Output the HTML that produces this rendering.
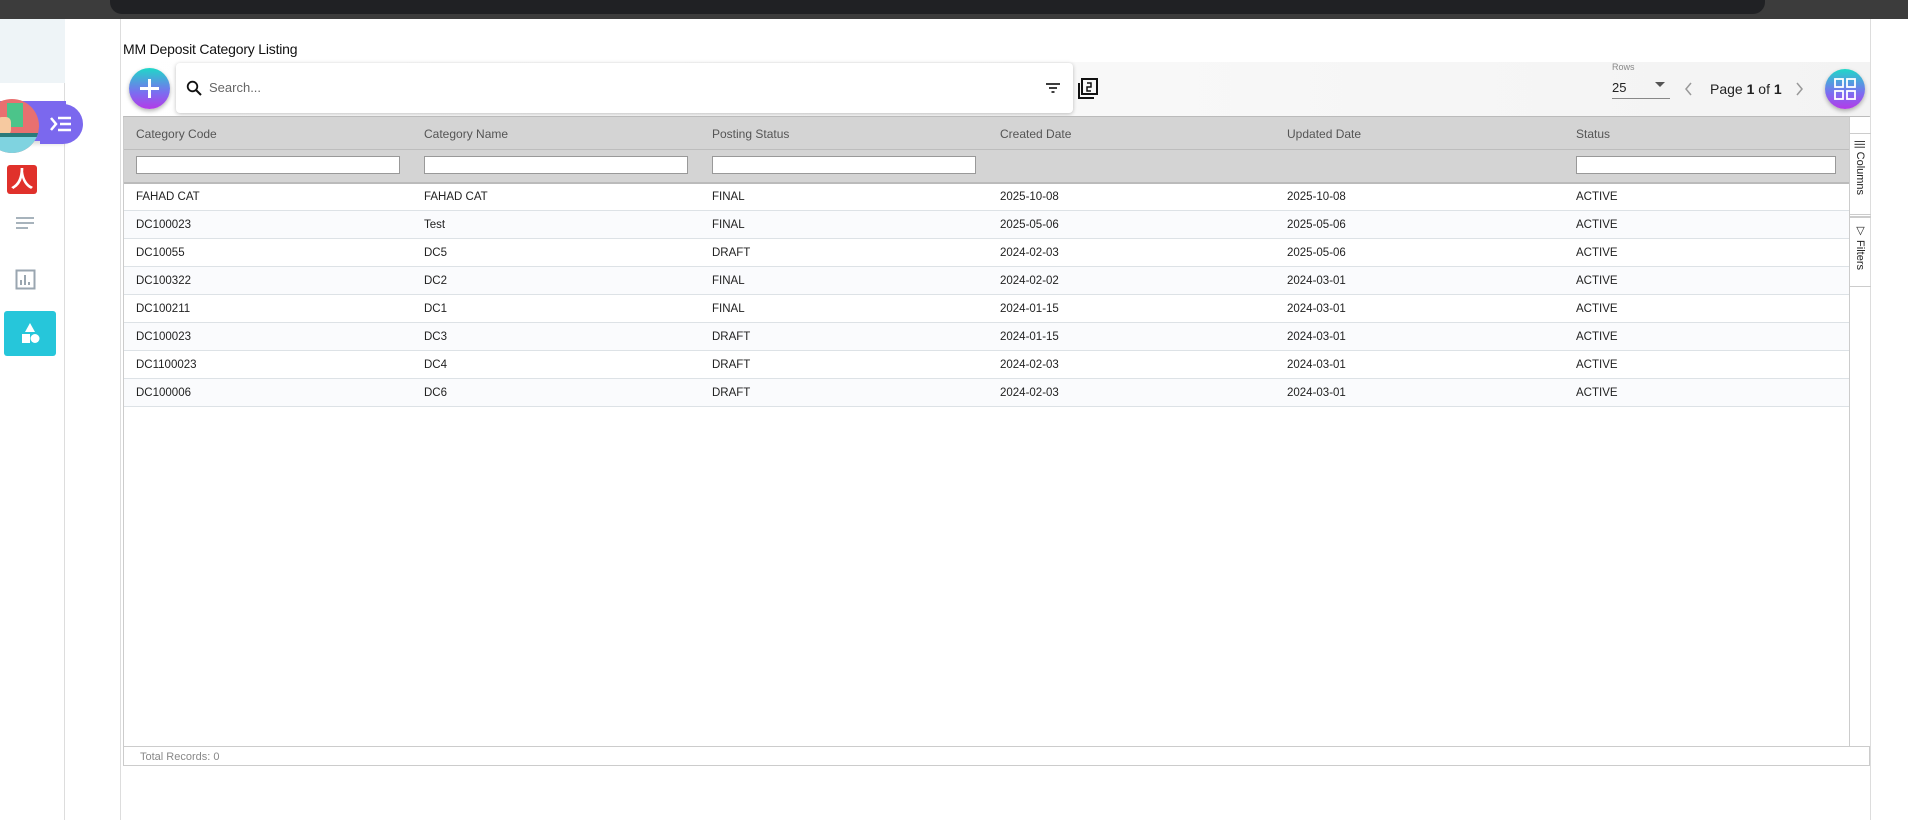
<!DOCTYPE html>
<html><head><meta charset="utf-8"><style>
*{box-sizing:border-box;margin:0;padding:0}
body{width:1908px;height:820px;overflow:hidden;background:#fff;font-family:"Liberation Sans",sans-serif;position:relative}
.abs{position:absolute}
.topbar{left:0;top:0;width:1908px;height:19px;background:#3c3c3c}
.addr{left:110px;top:0;width:1655px;height:14px;background:#202124;border-radius:0 0 12px 12px}
.side{left:0;top:19px;width:65px;height:801px;border-right:1px solid #ddd;background:#fff}
.vline{left:120px;top:19px;width:1px;height:801px;background:#ddd}
.rline{left:1870px;top:19px;width:1px;height:801px;background:#ddd}
.title{left:123px;top:41px;font-size:14px;color:#111;letter-spacing:-0.2px}
.toolbar{left:121px;top:62px;width:1749px;height:54px;background:linear-gradient(90deg,#fff 0%,#fafafa 40%,#f3f3f3 100%)}
.add{left:129px;top:68px;width:41px;height:41px;border-radius:50%;background:linear-gradient(180deg,#1fd8c8,#7b6ef0 60%,#b43ae8);box-shadow:0 2px 4px rgba(0,0,0,.3)}
.search{left:176px;top:63px;width:897px;height:50px;background:#fff;border-radius:4px;box-shadow:0 1px 4px rgba(0,0,0,.25)}
.table{left:123px;top:116px;width:1747px;height:650px;border:1px solid #ccc;border-top:2px solid #bbb}
.hdr{left:124px;top:117px;width:1725px;height:66px;background:#d4d4d4}
.hdr .t{position:absolute;top:10px;font-size:12px;color:#555}
.hdr input{position:absolute;top:39px;height:18px;border:1px solid #999;background:#fff}
.row{position:absolute;left:124px;width:1725px;height:28px;border-bottom:1px solid #dde2e6;font-size:11.5px;color:#222}
.row span{position:absolute;top:8px}
.alt{background:#fafbfd}
.sp{left:1849px;top:117px;width:21px;height:629px;border-left:1px solid #ccc;background:#fff}
.tab{position:absolute;left:0;width:21px;border-top:1px solid #ccc;border-bottom:1px solid #ccc;font-size:11px;color:#222}
.tab div{position:absolute;left:4px;writing-mode:vertical-rl}
.foot{left:124px;top:746px;width:1745px;height:19px;border-top:1px solid #ccc;font-size:11px;color:#888;padding:4px 0 0 16px}
</style></head><body>
<div class="abs topbar"></div><div class="abs addr"></div>
<div class="abs side">
 <div class="abs" style="left:0;top:0;width:65px;height:64px;background:#eef4f7"></div>
 <div class="abs" style="left:0;top:82px;width:66px;height:40px;background:#7b68ee;box-shadow:0 3px 4px rgba(0,0,0,.15)"></div>
 <div class="abs" style="left:40px;top:85px;width:43px;height:40px;background:#7b68ee;border-radius:0 20px 20px 0"></div>
 <div class="abs" style="left:-15px;top:80px;width:54px;height:54px;border-radius:50%;background:#e87070;overflow:hidden">
  <div class="abs" style="left:0;top:36px;width:54px;height:18px;background:#7fd3e0"></div>
  <div class="abs" style="left:22px;top:4px;width:16px;height:24px;background:#4cc48a"></div>
  <div class="abs" style="left:12px;top:18px;width:14px;height:18px;background:#f6c9a0;border-radius:5px"></div>
  <div class="abs" style="left:0;top:34px;width:54px;height:4px;background:#2a7a7a"></div>
 </div>
 <svg class="abs" style="left:49px;top:96px" width="24" height="18" viewBox="0 0 24 18"><path d="M2 3l5 6-5 6" stroke="#fff" stroke-width="2.5" fill="none"/><path d="M9 3h13M11 9h11M9 15h13" stroke="#fff" stroke-width="2.5"/></svg>
 <div class="abs" style="left:7px;top:146px;width:30px;height:29px;background:#e0312b;border-radius:3px;color:#fff;font-size:22px;line-height:29px;text-align:center;font-weight:bold">人</div>
 <svg class="abs" style="left:16px;top:197px" width="20" height="14"><path d="M0 2h18M0 7h18M0 12h12" stroke="#8a9aa6" stroke-width="1.5"/></svg>
 <svg class="abs" style="left:15px;top:250px" width="22" height="22"><rect x="1.5" y="1.5" width="18" height="18" fill="none" stroke="#9aa6b0" stroke-width="2"/><path d="M6 16v-5M10 16V6M14 16v-3" stroke="#9aa6b0" stroke-width="2"/></svg>
 <div class="abs" style="left:4px;top:292px;width:52px;height:45px;background:#26c6da;border-radius:3px">
  <svg class="abs" style="left:15px;top:11px" width="22" height="24"><path d="M11 1l5 9H6z" fill="#fff"/><rect x="3" y="12" width="8" height="9" fill="#fff"/><circle cx="16" cy="16.5" r="4.5" fill="#fff"/></svg>
 </div>
</div>
<div class="abs vline"></div><div class="abs rline"></div>
<div class="abs title">MM Deposit Category Listing</div>
<div class="abs toolbar"></div>
<div class="abs add"><svg class="abs" style="left:9px;top:9px" width="23" height="23"><path d="M11.5 2v19M2 11.5h19" stroke="#fff" stroke-width="3"/></svg></div>
<div class="abs search">
 <svg class="abs" style="left:10px;top:17px" width="16" height="16"><circle cx="6.5" cy="6.5" r="4.8" stroke="#111" stroke-width="1.8" fill="none"/><path d="M10 10l5 5" stroke="#111" stroke-width="2"/></svg>
 <div class="abs" style="left:33px;top:17px;font-size:13px;color:#666">Search...</div>
 <svg class="abs" style="left:869px;top:18px" width="16" height="14"><path d="M1 3h14M4 7h8M6.5 11h3" stroke="#222" stroke-width="1.8"/></svg>
</div>
<svg class="abs" style="left:1077px;top:78px" width="22" height="22"><rect x="5" y="1" width="15" height="15" fill="none" stroke="#111" stroke-width="2"/><path d="M2 5v15h15" fill="none" stroke="#111" stroke-width="2"/><path d="M10 5h4v4h-4v4h4" fill="none" stroke="#111" stroke-width="1.5"/></svg>
<div class="abs" style="left:1612px;top:62px;font-size:9px;color:#888">Rows</div>
<div class="abs" style="left:1612px;top:80px;font-size:13px;color:#222">25</div>
<div class="abs" style="left:1655px;top:82px;width:0;height:0;border-left:5px solid transparent;border-right:5px solid transparent;border-top:5px solid #555"></div>
<div class="abs" style="left:1612px;top:98px;width:58px;height:1px;background:#888"></div>
<svg class="abs" style="left:1684px;top:82px" width="10" height="14"><path d="M7 1L2 7l5 6" stroke="#999" stroke-width="1.5" fill="none"/></svg>
<div class="abs" style="left:1710px;top:81px;font-size:14px;color:#222">Page <b>1</b> of <b>1</b></div>
<svg class="abs" style="left:1794px;top:82px" width="10" height="14"><path d="M3 1l5 6-5 6" stroke="#999" stroke-width="1.5" fill="none"/></svg>
<div class="abs" style="left:1825px;top:69px;width:40px;height:40px;border-radius:50%;background:linear-gradient(180deg,#1fd8c8,#7b6ef0 60%,#b43ae8);box-shadow:0 2px 4px rgba(0,0,0,.3)">
 <svg class="abs" style="left:9px;top:9px" width="22" height="22"><g fill="none" stroke="#fff" stroke-width="1.8"><rect x="1" y="1" width="8" height="8"/><rect x="13" y="1" width="8" height="8"/><rect x="1" y="13" width="8" height="8"/><rect x="13" y="13" width="8" height="8"/></g></svg>
</div>
<div class="abs table"></div>
<div class="abs hdr">
 <div class="t" style="left:12px">Category Code</div><div class="t" style="left:300px">Category Name</div><div class="t" style="left:588px">Posting Status</div><div class="t" style="left:876px">Created Date</div><div class="t" style="left:1163px">Updated Date</div><div class="t" style="left:1452px">Status</div>
 <div style="position:absolute;left:0;top:32px;width:1725px;height:1px;background:#bdbdbd"></div>
 <input style="left:12px;width:264px"><input style="left:300px;width:264px"><input style="left:588px;width:264px"><input style="left:1452px;width:260px">
</div>
<div class="abs" style="left:124px;top:182px;width:1725px;height:2px;background:#bbb"></div>
<div class="row" style="top:183px"><span style="left:12px">FAHAD CAT</span><span style="left:300px">FAHAD CAT</span><span style="left:588px">FINAL</span><span style="left:876px">2025-10-08</span><span style="left:1163px">2025-10-08</span><span style="left:1452px">ACTIVE</span></div>
<div class="row alt" style="top:211px"><span style="left:12px">DC100023</span><span style="left:300px">Test</span><span style="left:588px">FINAL</span><span style="left:876px">2025-05-06</span><span style="left:1163px">2025-05-06</span><span style="left:1452px">ACTIVE</span></div>
<div class="row" style="top:239px"><span style="left:12px">DC10055</span><span style="left:300px">DC5</span><span style="left:588px">DRAFT</span><span style="left:876px">2024-02-03</span><span style="left:1163px">2025-05-06</span><span style="left:1452px">ACTIVE</span></div>
<div class="row alt" style="top:267px"><span style="left:12px">DC100322</span><span style="left:300px">DC2</span><span style="left:588px">FINAL</span><span style="left:876px">2024-02-02</span><span style="left:1163px">2024-03-01</span><span style="left:1452px">ACTIVE</span></div>
<div class="row" style="top:295px"><span style="left:12px">DC100211</span><span style="left:300px">DC1</span><span style="left:588px">FINAL</span><span style="left:876px">2024-01-15</span><span style="left:1163px">2024-03-01</span><span style="left:1452px">ACTIVE</span></div>
<div class="row alt" style="top:323px"><span style="left:12px">DC100023</span><span style="left:300px">DC3</span><span style="left:588px">DRAFT</span><span style="left:876px">2024-01-15</span><span style="left:1163px">2024-03-01</span><span style="left:1452px">ACTIVE</span></div>
<div class="row" style="top:351px"><span style="left:12px">DC1100023</span><span style="left:300px">DC4</span><span style="left:588px">DRAFT</span><span style="left:876px">2024-02-03</span><span style="left:1163px">2024-03-01</span><span style="left:1452px">ACTIVE</span></div>
<div class="row alt" style="top:379px"><span style="left:12px">DC100006</span><span style="left:300px">DC6</span><span style="left:588px">DRAFT</span><span style="left:876px">2024-02-03</span><span style="left:1163px">2024-03-01</span><span style="left:1452px">ACTIVE</span></div>
<div class="abs sp">
 <div class="tab" style="top:16px;height:82px"><div style="top:6px">||| Columns</div></div>
 <div class="tab" style="top:99px;height:71px;border-top:2px solid #ccc"><div style="top:6px">▽ Filters</div></div>
</div>
<div class="abs foot">Total Records: 0</div>
</body></html>
